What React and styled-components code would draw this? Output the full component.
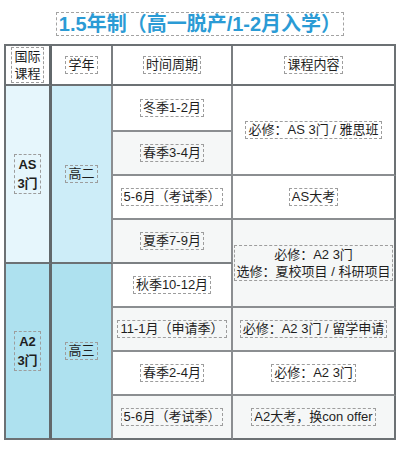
import React from "react";
import styled, { createGlobalStyle } from "styled-components";

const Global = createGlobalStyle`
  html, body { margin: 0; padding: 0; background: #ffffff; }
  body {
    font-family: "Liberation Sans", "Noto Sans CJK SC", sans-serif;
    color: #1e1e1e;
  }
`;

const Page = styled.div`
  width: 404px;
  padding: 12px 0 0 4px;
  box-sizing: border-box;
`;

const TitleRow = styled.div`
  width: 392px;
  display: flex;
  justify-content: center;
  margin-bottom: 8px;
`;

const Title = styled.h1`
  margin: 0;
  font-size: 20px;
  line-height: 22px;
  font-weight: 700;
  color: #2b9bd5;
  border: 1px dashed #a3a3a3;
  padding: 0 2px;
`;

const Table = styled.table`
  width: 392px;
  box-sizing: border-box;
  table-layout: fixed;
  border-collapse: separate;
  border-spacing: 0;
  border-top: 2px solid #6c7174;
  border-left: 2px solid #6c7174;
`;

const Head = styled.th`
  box-sizing: border-box;
  width: ${(p) => p.$w}px;
  height: 40px;
  padding: 0;
  font-weight: 400;
  font-size: 13px;
  text-align: center;
  vertical-align: middle;
  background: #ffffff;
  border-bottom: 2px solid #6c7174;
  border-right: ${(p) => (p.$first ? "3px solid #62686b" : p.$last ? "2px solid #6c7174" : "2px solid #7a7e81")};
`;

const Cell = styled.td`
  box-sizing: border-box;
  height: ${(p) => (p.$h ? `${p.$h}px` : "auto")};
  padding: 0;
  font-size: 13px;
  text-align: center;
  vertical-align: middle;
  background: ${(p) => p.$bg || "#ffffff"};
  border-right: ${(p) => p.$right || "2px solid #8b8e91"};
  border-bottom: ${(p) => p.$bottom || "2px solid #8b8e91"};
`;

const Tag = styled.span`
  display: inline-block;
  border: 1px dashed #9d9d9d;
  padding: 0 2px;
  line-height: ${(p) => p.$lh || 16}px;
  font-weight: ${(p) => (p.$bold ? 700 : 400)};
  white-space: nowrap;
`;

const WHITE = "#ffffff";
const GRAY = "#f5f7f7";
const AS1 = "#e6f6fc";
const AS2 = "#cdedf8";
const A2 = "#aee1ef";
const DARK = "2px solid #6c7174";
const COL1 = "3px solid #62686b";

export default function App() {
  return (
    <>
      <Global />
      <Page>
        <TitleRow>
          <Title>1.5年制（高一脱产/1-2月入学）</Title>
        </TitleRow>
        <Table>
          <thead>
            <tr>
              <Head $w={46} $first>
                <Tag $lh={17}>
                  国际
                  <br />
                  课程
                </Tag>
              </Head>
              <Head $w={61}>
                <Tag>学年</Tag>
              </Head>
              <Head $w={120}>
                <Tag>时间周期</Tag>
              </Head>
              <Head $w={163} $last>
                <Tag>课程内容</Tag>
              </Head>
            </tr>
          </thead>
          <tbody>
            <tr>
              <Cell rowSpan={4} $bg={AS1} $right={COL1} $bottom={DARK}>
                <Tag $bold $lh={19}>
                  AS
                  <br />
                  3门
                </Tag>
              </Cell>
              <Cell rowSpan={4} $bg={AS2} $bottom={DARK}>
                <Tag>高二</Tag>
              </Cell>
              <Cell $h={46} $bg={WHITE}>
                <Tag>冬季1-2月</Tag>
              </Cell>
              <Cell rowSpan={2} $bg={WHITE} $right={DARK}>
                <Tag>必修：AS 3门 / 雅思班</Tag>
              </Cell>
            </tr>
            <tr>
              <Cell $h={44} $bg={GRAY}>
                <Tag>春季3-4月</Tag>
              </Cell>
            </tr>
            <tr>
              <Cell $h={44} $bg={WHITE}>
                <Tag>5-6月（考试季）</Tag>
              </Cell>
              <Cell $bg={WHITE} $right={DARK}>
                <Tag>AS大考</Tag>
              </Cell>
            </tr>
            <tr>
              <Cell $h={44} $bg={GRAY} $bottom="2px solid #7c8083">
                <Tag>夏季7-9月</Tag>
              </Cell>
              <Cell rowSpan={2} $bg={GRAY} $right={DARK}>
                <Tag $lh={17}>
                  必修：A2 3门
                  <br />
                  选修：夏校项目 / 科研项目
                </Tag>
              </Cell>
            </tr>
            <tr>
              <Cell rowSpan={4} $bg={A2} $right={COL1} $bottom={DARK}>
                <Tag $bold $lh={19}>
                  A2
                  <br />
                  3门
                </Tag>
              </Cell>
              <Cell rowSpan={4} $bg={A2} $bottom={DARK}>
                <Tag>高三</Tag>
              </Cell>
              <Cell $h={44} $bg={WHITE}>
                <Tag>秋季10-12月</Tag>
              </Cell>
            </tr>
            <tr>
              <Cell $h={44} $bg={GRAY}>
                <Tag>11-1月（申请季）</Tag>
              </Cell>
              <Cell $bg={GRAY} $right={DARK}>
                <Tag>必修：A2 3门 / 留学申请</Tag>
              </Cell>
            </tr>
            <tr>
              <Cell $h={44} $bg={WHITE}>
                <Tag>春季2-4月</Tag>
              </Cell>
              <Cell $bg={WHITE} $right={DARK}>
                <Tag>必修：A2 3门</Tag>
              </Cell>
            </tr>
            <tr>
              <Cell $h={44} $bg={GRAY} $bottom={DARK}>
                <Tag>5-6月（考试季）</Tag>
              </Cell>
              <Cell $bg={GRAY} $right={DARK} $bottom={DARK}>
                <Tag>A2大考，换con offer</Tag>
              </Cell>
            </tr>
          </tbody>
        </Table>
      </Page>
    </>
  );
}
